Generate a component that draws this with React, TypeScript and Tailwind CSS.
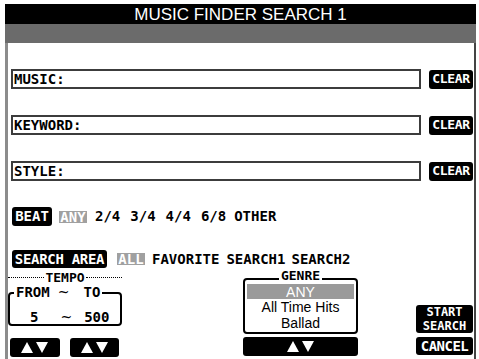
import React from "react";

const pixel = "font-['DejaVu_Sans_Mono',monospace] font-bold";

function Arrows({ className = "" }: { className?: string }) {
  return (
    <div className={`h-[19px] bg-black rounded-[3px] flex items-center justify-center ${className}`}>
      <svg width="28" height="11" viewBox="0 0 28 11">
        <polygon points="0,11 6,0 12,11" fill="white" />
        <polygon points="15,0 27,0 21,11" fill="white" />
      </svg>
    </div>
  );
}

function Field({ label }: { label: string }) {
  return (
    <div className="flex items-center">
      <div className={`w-[410px] h-[20px] border-2 border-[#3c3c3c] flex items-center pl-[1px] text-[14px] text-black ${pixel}`}>
        {label}
      </div>
      <div className={`ml-[8px] w-[44px] h-[19px] bg-black text-white rounded-[3px] flex items-center justify-center text-[13px] tracking-[-0.3px] ${pixel}`}>
        CLEAR
      </div>
    </div>
  );
}

export default function App() {
  return (
    <div className="w-[479px] h-[359px] bg-white overflow-hidden pt-[4px] pl-[5px] pr-[3px] flex flex-col">
      <div className="h-[20px] bg-black text-white flex items-center justify-center text-[17px] font-['Liberation_Sans',Arial,sans-serif] leading-none">
        MUSIC FINDER SEARCH 1
      </div>
      <div className="h-[19px] bg-[#6b6b6b]" />
      <div className="flex-1 border-l-[3px] border-l-[#8c8c8c] border-r-2 border-r-[#444] flex flex-col text-black">
        <div className="flex flex-col gap-[26px] pt-[26px] pl-[3px]">
          <Field label="MUSIC:" />
          <Field label="KEYWORD:" />
          <Field label="STYLE:" />
        </div>

        <div className={`mt-[26px] ml-[4px] h-[19px] flex items-center text-[14px] ${pixel}`}>
          <div className="h-[19px] w-[40px] bg-black text-white rounded-[3px] flex items-center justify-center">BEAT</div>
          <div className="ml-[7px] h-[12px] w-[28px] bg-[#a0a0a0] text-white flex items-center justify-center leading-none">ANY</div>
          <span className="ml-[8px]">2/4</span>
          <span className="ml-[10px]">3/4</span>
          <span className="ml-[10px]">4/4</span>
          <span className="ml-[10px]">6/8</span>
          <span className="ml-[8px]">OTHER</span>
        </div>

        <div className={`mt-[24px] ml-[4px] h-[18px] flex items-center text-[14px] ${pixel}`}>
          <div className="h-[18px] w-[95px] bg-black text-white rounded-[3px] flex items-center justify-center tracking-[-0.3px]">SEARCH AREA</div>
          <div className="ml-[10px] h-[12px] w-[28px] bg-[#a0a0a0] text-white flex items-center justify-center leading-none">ALL</div>
          <span className="ml-[7px]">FAVORITE</span>
          <span className="ml-[7px]">SEARCH1</span>
          <span className="ml-[6px]">SEARCH2</span>
        </div>

        <div className="mt-[4px] flex">
          <div className="w-[114px] flex flex-col">
            <div className={`h-[10px] flex items-center text-[13px] leading-none ${pixel}`}>
              <div className="flex-1 border-t border-dotted border-black" />
              <span className="px-[1px]">TEMPO</span>
              <div className="flex-1 border-t border-dotted border-black" />
            </div>
            <div className="relative mt-[10px] h-[34px] border-2 border-black rounded-[4px]">
              <div className={`absolute -top-[9px] left-[4px] bg-white flex items-center text-[14px] leading-none px-[2px] ${pixel}`}>
                <span>FROM</span>
                <span className="ml-[8px] font-['DejaVu_Sans',sans-serif] font-normal">~</span>
                <span className="ml-[14px]">TO</span>
              </div>
              <div className={`flex items-center text-[14px] leading-none mt-[16px] ${pixel}`}>
                <span className="ml-[20px]">5</span>
                <span className="ml-[22px] font-['DejaVu_Sans',sans-serif] font-normal">~</span>
                <span className="ml-[12px]">500</span>
              </div>
            </div>
            <div className="mt-[12px] ml-[2px] flex gap-[10px]">
              <Arrows className="w-[50px]" />
              <Arrows className="w-[49px]" />
            </div>
          </div>

          <div className="ml-[121px] w-[115px] flex flex-col">
            <div className="relative mt-[6px] h-[56px] border-2 border-black rounded-[4px] px-[2px] pt-[4px] font-['Liberation_Sans',Arial,sans-serif] text-[14px] leading-none">
              <div className="absolute -top-[10px] left-0 right-0 flex justify-center">
                <span className={`bg-white px-[2px] h-[11px] text-[13px] leading-[11px] ${pixel}`}>GENRE</span>
              </div>
              <div className="h-[15px] bg-[#9a9a9a] text-white flex items-center justify-center">ANY</div>
              <div className="h-[16px] flex items-center justify-center">All Time Hits</div>
              <div className="h-[16px] flex items-center justify-center">Ballad</div>
            </div>
            <Arrows className="mt-[3px] w-[115px]" />
          </div>

          <div className={`ml-[58px] w-[57px] flex flex-col ${pixel}`}>
            <div className="mt-[33px] h-[28px] bg-black text-white rounded-[3px] flex flex-col items-center justify-center text-[12px] leading-[14px]">
              <span>START</span>
              <span>SEARCH</span>
            </div>
            <div className="mt-[4px] h-[18px] bg-black text-white rounded-[3px] flex items-center justify-center text-[14px] tracking-[-0.5px] leading-none">
              CANCEL
            </div>
          </div>
        </div>
      </div>
    </div>
  );
}
